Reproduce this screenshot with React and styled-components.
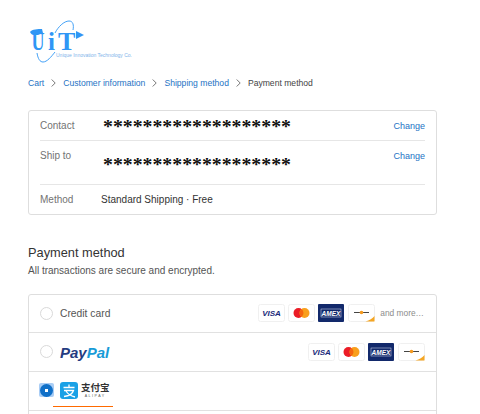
import React from 'react';
import styled, { createGlobalStyle } from 'styled-components';

const Global = createGlobalStyle`
  html, body { margin: 0; padding: 0; background: #fff; overflow: hidden; height: 414px; }
  body { font-family: "Liberation Sans", Arial, sans-serif; color: #545454; }
`;
const Page = styled.div`
  width: 409px;
  padding: 20px 0 0 28px;
  height: 394px;
  overflow: hidden;
`;
const LogoBox = styled.svg`
  display: block;
  width: 110px;
  height: 44px;
`;
const Crumbs = styled.nav`
  display: flex;
  align-items: center;
  margin-top: 13px;
  height: 12px;
  font-size: 8.6px;
  white-space: nowrap;
`;
const Crumb = styled.span`
  color: ${p => (p.$current ? '#444' : '#2573c4')};
`;
const Chevron = styled.svg`
  width: 5px;
  height: 8px;
  margin: 0 7px 0 7px;
  fill: none;
  stroke: #777;
  stroke-width: 1;
`;
const Review = styled.div`
  margin-top: 21px;
  border: 1px solid #dedede;
  border-radius: 3px;
  padding: 0 11px;
  box-sizing: border-box;
  height: 105px;
`;
const Row = styled.div`
  display: flex;
  align-items: ${p => (p.$top ? 'flex-start' : 'center')};
  height: ${p => p.$h}px;
  box-sizing: border-box;
  font-size: 10px;
  & + & { border-top: 1px solid #e6e6e6; }
`;
const Label = styled.span`
  width: 61px;
  flex: none;
  color: #737373;
  ${p => p.$top && 'margin-top: 9px;'}
`;
const Masked = styled.span`
  flex: 1;
  font-family: "Liberation Serif", serif;
  font-size: 19.8px;
  font-weight: 700;
  line-height: 20px;
  color: #111;
  margin-left: 2px;
  ${p => p.$top && 'margin-top: 13px;'}
`;
const Value = styled.span`
  flex: 1;
  color: #333;
`;
const Change = styled.a`
  color: #2573c4;
  font-size: 9px;
  ${p => p.$top && 'margin-top: 10px;'}
`;
const Title = styled.h2`
  margin: 30px 0 0;
  font-size: 12.8px;
  line-height: 16px;
  font-weight: 400;
  color: #333;
`;
const Sub = styled.p`
  margin: 3px 0 0;
  font-size: 10px;
  line-height: 13px;
  color: #545454;
`;
const Pay = styled.div`
  margin-top: 17px;
  border: 1px solid #dedede;
  border-radius: 3px 3px 0 0;
`;
const PayRow = styled.div`
  display: flex;
  align-items: center;
  height: ${p => p.$h}px;
  padding: 0 11px;
  & + & { border-top: 1px solid #e1e1e1; }
`;
const Radio = styled.span`
  width: 11px;
  height: 11px;
  flex: none;
  border-radius: 50%;
  border: 1px solid #d9d9d9;
  background: #fff;
  margin: -1px 7px 0 0;
`;
const RadioOn = styled.span`
  width: 15px;
  height: 14px;
  flex: none;
  margin: -2px 6px 0 -1px;
  background: #a9cdf5;
  border-radius: 2px;
  display: flex;
  align-items: center;
  justify-content: center;
  &::before {
    content: '';
    width: 13px;
    height: 13px;
    border-radius: 50%;
    background: radial-gradient(circle, #fff 0 1.5px, #1070c8 2px);
  }
`;
const PayLabel = styled.span`
  font-size: 10.3px;
  color: #545454;
  margin-top: -1px;
`;
const Cards = styled.div`
  margin: -1px 0 0 auto;
  display: flex;
  align-items: center;
  gap: 3px;
`;
const More = styled.span`
  font-size: 8.4px;
  color: #8c8c8c;
  margin-left: 2px;
  margin-right: 1px;
`;
const CardFrame = styled.svg`
  display: block;
  width: 27px;
  height: 18px;
`;
const PayPalMark = styled.span`
  font-family: "Liberation Sans", sans-serif;
  font-weight: 700;
  font-style: italic;
  font-size: 15px;
  letter-spacing: 0;
  color: #253b80;
  & > b { color: #179bd7; font-weight: 700; }
`;
const AliMark = styled.div`
  position: relative;
  display: flex;
  align-items: center;
  gap: 3px;
  margin-top: -2px;
`;
const AliWords = styled.div`
  display: flex;
  flex-direction: column;
  align-items: center;
  color: #333;
`;
const AliCn = styled.span`
  font-family: "Noto Sans CJK SC", sans-serif;
  font-size: 9.5px;
  line-height: 11px;
  font-weight: 700;
`;
const AliEn = styled.span`
  font-size: 3.6px;
  line-height: 5px;
  letter-spacing: 1.500px;
  margin-top: 1px;
  color: #555;
`;
const Underline = styled.span`
  position: absolute;
  left: -7px;
  width: 60px;
  top: 24px;
  height: 1px;
  background: #ff6a00;
`;

const LOGO_BLUE = '#2f96f5';
const Logo = () => (
  <LogoBox viewBox="28 20 110 44">
    <path d="M37 53c1 6 3 9 6 9 4 0 8-5 12-10" fill="none" stroke={LOGO_BLUE} strokeWidth=".9" />
    <path d="M55 33c3-6 9-12 14-12 4 0 5 4 4 9" fill="none" stroke={LOGO_BLUE} strokeWidth=".9" />
    <text transform="translate(31.500 50) scale(.72 1)" fontFamily="Liberation Serif, serif" fontSize="25" fontWeight="700" fill={LOGO_BLUE}>U</text>
    <path d="M30 32c2-3 8-3 12-3l1 4-5 2h-4c-2 0-3-1-4-3z" fill={LOGO_BLUE} />
    <text x="48" y="50" fontFamily="Liberation Serif, serif" fontSize="25" fontWeight="700" fill={LOGO_BLUE}>i</text>
    <text x="58" y="50" fontFamily="Liberation Serif, serif" fontSize="26" fontWeight="700" fill={LOGO_BLUE}>T</text>
    <path d="M76 31l8 4-8 4z" fill={LOGO_BLUE} />
    <text x="56" y="57" fontFamily="Liberation Sans, sans-serif" fontSize="5" fill="#7fb4ea" textLength="76">Unique Innovation Technology Co.</text>
  </LogoBox>
);

const Frame = () => <rect x=".5" y=".5" width="26" height="17" rx="2" fill="#fff" stroke="#f0f0f0" />;
const Visa = () => (
  <CardFrame viewBox="0 0 27 18"><Frame />
    <text x="13.500" y="12" textAnchor="middle" fontFamily="Liberation Sans, sans-serif" fontSize="8" fontWeight="700" fontStyle="italic" fill="#1a2a7a">VISA</text>
  </CardFrame>
);
const Master = () => (
  <CardFrame viewBox="0 0 27 18"><Frame />
    <circle cx="10.500" cy="9" r="5" fill="#eb1c26" />
    <circle cx="16.500" cy="9" r="5" fill="#f99f1b" />
    <path d="M13.500 5a5 5 0 0 1 0 8 5 5 0 0 1 0-8z" fill="#f5650f" />
  </CardFrame>
);
const Amex = () => (
  <CardFrame viewBox="0 0 27 18">
    <rect width="26" height="18" rx="1" fill="#12296b" />
    <rect x="3" y="5" width="20" height="8" fill="none" stroke="#dfe6f5" strokeWidth=".5" />
    <text x="13" y="11.500" textAnchor="middle" fontFamily="Liberation Sans, sans-serif" fontSize="6.500" fontWeight="700" fontStyle="italic" fill="#fff">AMEX</text>
  </CardFrame>
);
const Discover = () => (
  <CardFrame viewBox="0 0 27 18"><Frame />
    <path d="M6 8.500h15" stroke="#444" strokeWidth="1" />
    <circle cx="13.500" cy="8.500" r="1.800" fill="#f59a1e" />
    <path d="M26.500 12v5.500h-9c4-1 7-3 9-5.500z" fill="#f5a623" />
  </CardFrame>
);
const CardSet = () => (<><Visa /><Master /><Amex /><Discover /></>);

const AliIcon = () => (
  <svg width="18" height="17" viewBox="0 0 18 17" style={{ display: 'block' }}>
    <rect width="18" height="17" rx="3" fill="#1aa1e6" />
    <path d="M3.500 5.500h11M9 2.500v3M4 8.500h9.500c-1 3.500-5 5.500-9.500 6M6 9c1.500 2.500 5 5 9 6" fill="none" stroke="#fff" strokeWidth="1.300" />
  </svg>
);

const Sep = () => (
  <Chevron viewBox="0 0 5 8"><path d="M.7.500l3.500 3.500-3.500 3.500" /></Chevron>
);

export default function App() {
  return (
    <Page>
      <Global />
      <Logo />
      <Crumbs>
        <Crumb>Cart</Crumb><Sep />
        <Crumb>Customer information</Crumb><Sep />
        <Crumb>Shipping method</Crumb><Sep />
        <Crumb $current>Payment method</Crumb>
      </Crumbs>
      <Review>
        <Row $h={29}><Label>Contact</Label><Masked>*******************</Masked><Change>Change</Change></Row>
        <Row $h={44} $top><Label $top>Ship to</Label><Masked $top>*******************</Masked><Change $top>Change</Change></Row>
        <Row $h={30}><Label>Method</Label><Value>Standard Shipping · Free</Value></Row>
      </Review>
      <Title>Payment method</Title>
      <Sub>All transactions are secure and encrypted.</Sub>
      <Pay>
        <PayRow $h={37}><Radio /><PayLabel>Credit card</PayLabel><Cards><CardSet /><More>and more…</More></Cards></PayRow>
        <PayRow $h={38}><Radio /><PayPalMark>Pay<b>Pal</b></PayPalMark><Cards><CardSet /></Cards></PayRow>
        <PayRow $h={38}><RadioOn /><AliMark><AliIcon /><AliWords><AliCn>支付宝</AliCn><AliEn>ALIPAY</AliEn></AliWords><Underline /></AliMark></PayRow>
        <PayRow $h={20} />
      </Pay>
    </Page>
  );
}
